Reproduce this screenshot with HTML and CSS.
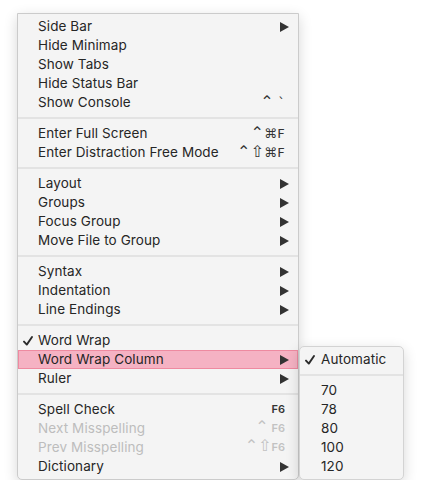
FILE: index.html
```html
<!DOCTYPE html>
<html>
<head>
<meta charset="utf-8">
<link rel="stylesheet" href="styles.css">
</head>
<body>
<div class="stage">
  <div class="menu">
    <div class="item"><span class="chk"></span><span class="label">Side Bar</span><svg class="arrow" viewBox="0 0 9 10"><polygon points="0,0 9,5 0,10"/></svg></div>
    <div class="item"><span class="chk"></span><span class="label">Hide Minimap</span></div>
    <div class="item"><span class="chk"></span><span class="label">Show Tabs</span></div>
    <div class="item"><span class="chk"></span><span class="label">Hide Status Bar</span></div>
    <div class="item"><span class="chk"></span><span class="label">Show Console</span><span class="key"><span class="m">⌃</span> `</span></div>
    <div class="sep"></div>
    <div class="item"><span class="chk"></span><span class="label">Enter Full Screen</span><span class="key"><span class="m">⌃</span>⌘F</span></div>
    <div class="item"><span class="chk"></span><span class="label">Enter Distraction Free Mode</span><span class="key"><span class="m">⌃⇧</span>⌘F</span></div>
    <div class="sep"></div>
    <div class="item"><span class="chk"></span><span class="label">Layout</span><svg class="arrow" viewBox="0 0 9 10"><polygon points="0,0 9,5 0,10"/></svg></div>
    <div class="item"><span class="chk"></span><span class="label">Groups</span><svg class="arrow" viewBox="0 0 9 10"><polygon points="0,0 9,5 0,10"/></svg></div>
    <div class="item"><span class="chk"></span><span class="label">Focus Group</span><svg class="arrow" viewBox="0 0 9 10"><polygon points="0,0 9,5 0,10"/></svg></div>
    <div class="item"><span class="chk"></span><span class="label">Move File to Group</span><svg class="arrow" viewBox="0 0 9 10"><polygon points="0,0 9,5 0,10"/></svg></div>
    <div class="sep"></div>
    <div class="item"><span class="chk"></span><span class="label">Syntax</span><svg class="arrow" viewBox="0 0 9 10"><polygon points="0,0 9,5 0,10"/></svg></div>
    <div class="item"><span class="chk"></span><span class="label">Indentation</span><svg class="arrow" viewBox="0 0 9 10"><polygon points="0,0 9,5 0,10"/></svg></div>
    <div class="item"><span class="chk"></span><span class="label">Line Endings</span><svg class="arrow" viewBox="0 0 9 10"><polygon points="0,0 9,5 0,10"/></svg></div>
    <div class="sep"></div>
    <div class="item"><span class="chk"><svg class="check" viewBox="0 0 10 10"><path d="M1 5.6 L3.8 8.6 L9 1"/></svg></span><span class="label">Word Wrap</span></div>
    <div class="item active"><span class="chk"></span><span class="label">Word Wrap Column</span><svg class="arrow" viewBox="0 0 9 10"><polygon points="0,0 9,5 0,10"/></svg>
      <div class="submenu">
        <div class="item sub"><span class="chk"><svg class="check" viewBox="0 0 10 10"><path d="M1 5.6 L3.8 8.6 L9 1"/></svg></span><span class="label">Automatic</span></div>
        <div class="sep"></div>
        <div class="item sub"><span class="chk"></span><span class="label">70</span></div>
        <div class="item sub"><span class="chk"></span><span class="label">78</span></div>
        <div class="item sub"><span class="chk"></span><span class="label">80</span></div>
        <div class="item sub"><span class="chk"></span><span class="label">100</span></div>
        <div class="item sub"><span class="chk"></span><span class="label">120</span></div>
      </div>
    </div>
    <div class="item"><span class="chk"></span><span class="label">Ruler</span><svg class="arrow" viewBox="0 0 9 10"><polygon points="0,0 9,5 0,10"/></svg></div>
    <div class="sep"></div>
    <div class="item"><span class="chk"></span><span class="label">Spell Check</span><span class="key fn">F6</span></div>
    <div class="item disabled"><span class="chk"></span><span class="label">Next Misspelling</span><span class="key fn"><span class="m">⌃</span> F6</span></div>
    <div class="item disabled"><span class="chk"></span><span class="label">Prev Misspelling</span><span class="key fn"><span class="m">⌃⇧</span>F6</span></div>
    <div class="item"><span class="chk"></span><span class="label">Dictionary</span><svg class="arrow" viewBox="0 0 9 10"><polygon points="0,0 9,5 0,10"/></svg></div>
  </div>
</div>
</body>
</html>
```

FILE: styles.css
```css
html, body {
  margin: 0;
  background: #ffffff;
}

body {
  font-family: Inter, "Noto Sans", "DejaVu Sans", sans-serif;
  font-size: 13.5px;
  letter-spacing: 0.1px;
  color: #262626;
}

.stage {
  padding: 13px 0 0 17px;
}

.menu {
  position: relative;
  width: 282px;
  box-sizing: border-box;
  background: #f4f4f4;
  border: 1px solid #cbcbcb;
  border-radius: 0 0 5px 5px;
  padding: 3px 0 3px;
  box-shadow: 0 4px 14px rgba(0, 0, 0, 0.16);
}

.item {
  position: relative;
  display: grid;
  grid-template-columns: 20px 1fr auto;
  align-items: center;
  height: 19px;
  line-height: 19px;
  padding-right: 11px;
  white-space: nowrap;
}

.chk {
  display: flex;
  align-items: center;
  padding-left: 5px;
  height: 19px;
}

.check {
  width: 10px;
  height: 10px;
  fill: none;
  stroke: #2b2b2b;
  stroke-width: 1.9;
  stroke-linecap: round;
  stroke-linejoin: round;
}

.arrow {
  width: 9px;
  height: 10px;
  fill: #333333;
  margin-right: -2px;
}

.key {
  font-family: "DejaVu Sans", sans-serif;
  font-size: 13px;
  color: #333333;
  letter-spacing: 0.3px;
  margin-right: 2px;
}

.key .m {
  font-family: "DejaVu Sans", sans-serif;
  font-size: 16px;
  font-weight: 400;
  letter-spacing: 0;
  line-height: 1;
}

.key.fn {
  font-family: Inter, "DejaVu Sans", sans-serif;
  font-size: 11px;
  font-weight: 600;
  letter-spacing: 0;
}

.disabled {
  color: #bdbdbd;
}

.disabled .key {
  color: #c2c2c2;
}

.active {
  background: #f5b2c3;
  box-shadow: inset 0 0 0 1px #ee8aa0;
}

.sep {
  height: 2px;
  margin: 5px 0;
  background: #e3e3e3;
}

.submenu {
  position: absolute;
  left: calc(100% + 1px);
  top: -4px;
  width: 105px;
  box-sizing: border-box;
  background: #f4f4f4;
  border: 1px solid #d3d3d3;
  border-radius: 5px;
  padding: 3px 0 3px;
  box-shadow: 0 4px 14px rgba(0, 0, 0, 0.16);
}

.submenu .item {
  grid-template-columns: 21px 1fr;
  padding-right: 0;
}
```
